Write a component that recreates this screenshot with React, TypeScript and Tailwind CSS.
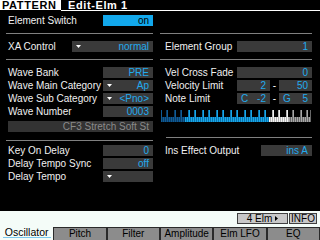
import React from "react";

const font = { fontFamily: '"Liberation Sans", Arial, sans-serif' };

function Arrow() {
  return (
    <svg width="5" height="3" viewBox="0 0 5 3" className="shrink-0">
      <path d="M0 0H5L2.5 3Z" fill="#ffffff" />
    </svg>
  );
}

function Box({
  w,
  children,
  arrow,
  className = "",
}: {
  w: string;
  children?: React.ReactNode;
  arrow?: boolean;
  className?: string;
}) {
  return (
    <div className={`${w} h-[11px] flex items-center bg-[#3a3a3a] pl-[4px] pr-[4px] ${className}`}>
      {arrow && <Arrow />}
      <span className="ml-auto text-[#22aaee] leading-[11px]">{children}</span>
    </div>
  );
}

function Row({ label, children, right }: { label: string; children?: React.ReactNode; right?: boolean }) {
  return (
    <div className={`flex items-center h-[11px] ${right ? "pl-[5px]" : "pl-[2px]"}`}>
      <span className="text-[#f0f0f0] leading-[11px] whitespace-nowrap">{label}</span>
      <div className="ml-auto flex items-center">{children}</div>
    </div>
  );
}

function Keyboard() {
  const keys = Array.from({ length: 75 }, (_, i) => i);
  const col = (i: number) =>
    i < 12
      ? ["#0f5c96", "#0a3c66"]
      : i < 54
      ? ["#18a8e8", "#0b74ae"]
      : i < 64
      ? ["#f2f2f2", "#b4b4b4"]
      : ["#a8a8a8", "#686868"];
  return (
    <svg width="150" height="12" viewBox="0 0 150 12" shapeRendering="crispEdges">
      {keys.map((i) => {
        const [a, b] = col(i);
        return (
          <g key={i}>
            <rect x={2 * i} y={0} width={1} height={12} fill={a} />
            <rect x={2 * i + 1} y={0} width={1} height={12} fill={b} />
          </g>
        );
      })}
      {keys
        .filter((i) => [0, 1, 3, 4, 5].includes(i % 7) && i < 74)
        .map((i) => (
          <rect key={`b${i}`} x={2 * i + 1} y={0} width={1.5} height={7} fill="#000000" />
        ))}
    </svg>
  );
}

export default function App() {
  return (
    <div className="w-[320px] h-[240px] bg-black flex flex-col overflow-hidden text-[10px]" style={font}>
      {/* ── Header ─────────────────────────────── */}
      <div className="flex h-[11px] shrink-0">
        <div className="w-[61px] h-[10px] bg-white text-black font-bold text-[11px] leading-[11px] tracking-[0.6px] pl-[2px] whitespace-nowrap">
          PATTERN
        </div>
        <div className="flex-1 h-[11px] border-b border-white text-white font-bold text-[11px] leading-[11px] tracking-[0.6px] pl-[7px] whitespace-nowrap">
          Edit-Elm 1
        </div>
      </div>

      {/* ── Element Switch ─────────────────────── */}
      <div className="flex h-[23px] shrink-0">
        <div className="ml-[6px] w-[147px] pt-[4px] border-b border-[#808080]">
          <Row label="Element Switch">
            <div className="w-[50px] h-[11px] bg-[#12a8ec] text-black text-right pr-[4px] leading-[11px]">on</div>
          </Row>
        </div>
        <div className="ml-[7px] w-[152px] border-b border-[#808080]" />
      </div>

      {/* ── XA / Element Group ─────────────────── */}
      <div className="flex h-[26px] shrink-0">
        <div className="ml-[6px] w-[147px] pt-[7px] border-b border-[#808080]">
          <Row label="XA Control">
            <Box w="w-[81px]" arrow>
              normal
            </Box>
          </Row>
        </div>
        <div className="ml-[7px] w-[152px] pt-[7px] border-b border-[#808080]">
          <Row label="Element Group" right>
            <Box w="w-[75px]">1</Box>
          </Row>
        </div>
      </div>

      {/* ── Wave ───────────────────────────────── */}
      <div className="flex items-start h-[81px] shrink-0">
        <div className="ml-[6px] w-[147px] h-[81px] pt-[7px] border-b border-[#808080] flex flex-col gap-[2px]">
          <Row label="Wave Bank">
            <Box w="w-[50px]">PRE</Box>
          </Row>
          <Row label="Wave Main Category">
            <Box w="w-[50px]" arrow>
              Ap
            </Box>
          </Row>
          <Row label="Wave Sub Category">
            <Box w="w-[50px]" arrow>
              &lt;Pno&gt;
            </Box>
          </Row>
          <Row label="Wave Number">
            <Box w="w-[50px]">0003</Box>
          </Row>
          <div className="ml-[2px] mt-[2px] h-[11px] bg-[#333333] text-[#8a8a8a] text-right pr-[4px] leading-[11px]">
            CF3 Stretch Soft St
          </div>
        </div>
        <div className="ml-[7px] w-[152px] h-[78px] pt-[7px] flex flex-col gap-[2px]">
          <Row label="Vel Cross Fade" right>
            <Box w="w-[75px]">0</Box>
          </Row>
          <Row label="Velocity Limit" right>
            <Box w="w-[33px]">2</Box>
            <span className="w-[9px] text-center text-white leading-[11px]">-</span>
            <Box w="w-[33px]">50</Box>
          </Row>
          <Row label="Note Limit" right>
            <div className="w-[33px] h-[11px] bg-[#3a3a3a] flex justify-between px-[4px] text-[#22aaee] leading-[11px]">
              <span>C</span>
              <span>-2</span>
            </div>
            <span className="w-[9px] text-center text-white leading-[11px]">-</span>
            <div className="w-[33px] h-[11px] bg-[#3a3a3a] flex justify-between px-[4px] text-[#22aaee] leading-[11px]">
              <span>G</span>
              <span>5</span>
            </div>
          </Row>
          <div className="ml-[1px] mt-[4px] h-[12px]">
            <Keyboard />
          </div>
          <div className="mt-auto ml-[6px] border-b border-[#808080]" />
        </div>
      </div>

      {/* ── Delay / Ins Effect ─────────────────── */}
      <div className="flex shrink-0 pt-[4px]">
        <div className="ml-[6px] w-[147px] flex flex-col gap-[2px]">
          <Row label="Key On Delay">
            <Box w="w-[50px]">0</Box>
          </Row>
          <Row label="Delay Tempo Sync">
            <Box w="w-[50px]">off</Box>
          </Row>
          <Row label="Delay Tempo">
            <Box w="w-[50px]" arrow />
          </Row>
        </div>
        <div className="ml-[7px] w-[152px]">
          <Row label="Ins Effect Output" right>
            <Box w="w-[51px]">ins A</Box>
          </Row>
        </div>
      </div>

      {/* ── Footer ─────────────────────────────── */}
      <div className="mt-auto h-[29px] bg-[#f4fcf8] flex flex-col shrink-0 text-black">
        <div className="flex justify-end gap-[1px] pr-[3px] pt-[2px] h-[16px]">
          <div className="w-[51px] h-[11px] bg-[#c8c8c8] border border-[#404040] flex items-center justify-center gap-[3px] leading-[9px]">
            <span>4 Elm</span>
            <svg width="3" height="5" viewBox="0 0 3 5">
              <path d="M0 0L3 2.5L0 5Z" fill="#000" />
            </svg>
          </div>
          <div className="w-[28px] h-[11px] bg-[#c8c8c8] border border-[#404040] flex items-center justify-center leading-[9px]">
            INFO
          </div>
        </div>
        <div className="grid grid-cols-6 h-[13px]">
          <div className="relative text-center leading-[10px] text-[10.5px]">
            Oscillator
            <div className="absolute left-[3px] right-[2px] bottom-[2px] h-[1px] bg-[#7cc8ec]" />
          </div>
          {["Pitch", "Filter", "Amplitude", "Elm LFO", "EQ"].map((t) => (
            <div key={t} className="bg-[#8c8c8c] border border-b-0 border-[#2a2a2a] text-center leading-[12px] whitespace-nowrap overflow-hidden">
              {t}
            </div>
          ))}
        </div>
      </div>
    </div>
  );
}
